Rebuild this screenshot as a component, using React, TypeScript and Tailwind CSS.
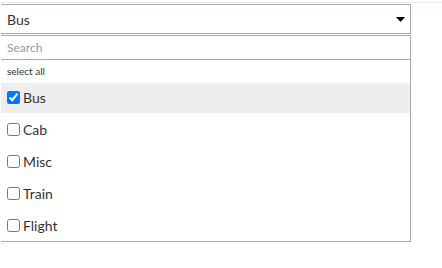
import React from 'react';

const items = ['Bus', 'Cab', 'Misc', 'Train', 'Flight'];

export default function App() {
  return (
    <div className="h-[268px] w-[442px] bg-white text-[#333]" style={{ fontFamily: 'Lato, "Open Sans", sans-serif' }}>
      <div className="h-[3px] border-b border-[#e1eef9]" />
      <div className="ml-[1px] mt-px w-[410px]">
        {/* select */}
        <div className="flex h-[30px] items-center justify-between border-y border-r border-[#a9a9a9] pl-[6px] pr-[5px]">
          <span className="text-[14px]">Bus</span>
          <svg width="9" height="5" viewBox="0 0 9 5">
            <path d="M0 0h9L4.5 5z" fill="#000" />
          </svg>
        </div>

        {/* dropdown */}
        <div className="mt-px border-y border-r border-[#a9a9a9]">
          <div className="flex h-[24px] items-center border-b border-[#a9a9a9] pl-[6px] text-[12px] text-[#999]">
            Search
          </div>
          <div className="flex h-[22px] items-center pl-[6px] text-[10px]">select all</div>
          <div className="mt-px flex flex-col gap-[2px]">
            {items.map((item, i) => (
              <label
                key={item}
                className={`flex h-[30px] items-center pb-px text-[14px] ${i === 0 ? 'bg-[#eeeeee]' : ''}`}
              >
                <input type="checkbox" defaultChecked={i === 0} className="ml-[6px] mr-[3px] h-[13px] w-[13px]" />
                {item}
              </label>
            ))}
          </div>
        </div>
      </div>
    </div>
  );
}
